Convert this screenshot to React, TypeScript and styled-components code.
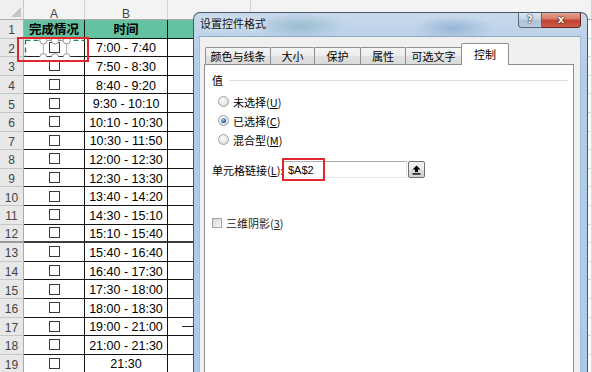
import React from "react";
import styled, { createGlobalStyle, css } from "styled-components";

const GlobalStyle = createGlobalStyle`
  *, *::before, *::after { box-sizing: border-box; }
  html, body { margin: 0; padding: 0; background: #fff; }
  body {
    width: 592px;
    height: 372px;
    overflow: hidden;
    font-family: "Liberation Sans", Arial, "Noto Sans CJK SC", sans-serif;
  }
`;

const Stage = styled.div`
  position: relative;
  width: 592px;
  height: 372px;
  overflow: hidden;
  background: #fff;
`;

/* ---------- spreadsheet ---------- */

const Sheet = styled.div`
  display: grid;
  grid-template-columns: 24px 61px 83px 83px 1fr;
  grid-template-rows: 20px repeat(19, 18.6px);
`;

const Corner = styled.div`
  position: relative;
  background: #f0f0f0;
  border-right: 1px solid #c9c9c9;
  border-bottom: 1px solid #ababab;
  &::after {
    content: "";
    position: absolute;
    right: 2px;
    bottom: 2px;
    width: 0;
    height: 0;
    border-left: 10px solid transparent;
    border-bottom: 10px solid #c6c6c6;
  }
`;

const ColHeader = styled.div`
  background: #f3f3f3;
  border-right: 1px solid #d2d2d2;
  border-bottom: 1px solid #ababab;
  color: #444;
  font: 12px/14px "Liberation Sans", Arial, sans-serif;
  text-align: center;
  padding-top: 7px;
`;

const RowHeader = styled.div<{ $heavy?: boolean }>`
  display: flex;
  align-items: center;
  justify-content: center;
  padding-top: 3px;
  background: #e8e8e8;
  border-right: 1px solid #ababab;
  border-bottom: ${(p) => (p.$heavy ? "2px solid #9a9a9a" : "1px solid #c6c6c6")};
  color: #444;
  font: 12px/14px "Liberation Sans", Arial, sans-serif;
`;

type Kind = "a" | "b" | "c" | "d";

const Cell = styled.div<{ $kind: Kind; $head?: boolean; $heavy?: boolean; $stub?: boolean }>`
  position: relative;
  display: flex;
  align-items: center;
  justify-content: center;
  padding-top: 2px;
  color: #000;
  font-family: "Liberation Sans", Arial, "Noto Sans CJK SC", sans-serif;
  font-size: 12.5px;
  line-height: 14px;
  font-weight: ${(p) => (p.$head ? 700 : 400)};
  background: ${(p) => (p.$head && p.$kind !== "d" ? "#64c2a1" : "#fff")};
  border-bottom: ${(p) =>
    p.$kind === "d" ? "1px solid #d9d9d9" : p.$heavy ? "2px solid #3c3c3c" : "1px solid #141414"};
  border-right: ${(p) =>
    p.$kind === "a" || p.$kind === "b" ? "1px solid #141414" : "1px solid #d9d9d9"};
  ${(p) =>
    p.$stub &&
    css`
      &::after {
        content: "";
        position: absolute;
        left: 14px;
        right: 0;
        top: 50%;
        height: 1px;
        background: #222;
      }
    `}
`;

const SheetCheck = styled.span`
  display: block;
  width: 11px;
  height: 11px;
  margin-top: -2px;
  border: 1px solid #3a3a3a;
  background: #fff;
`;

const SelectionLayer = styled.svg`
  position: absolute;
  left: 0;
  top: 0;
  overflow: visible;
  pointer-events: none;
`;

const RedMark = styled.div<{ $l: number; $t: number; $w: number; $h: number }>`
  position: absolute;
  left: ${(p) => p.$l}px;
  top: ${(p) => p.$t}px;
  width: ${(p) => p.$w}px;
  height: ${(p) => p.$h}px;
  border: 2px solid #e2262b;
  pointer-events: none;
`;

/* ---------- dialog ---------- */

const Window = styled.div`
  position: absolute;
  left: 193px;
  top: 12px;
  width: 395px;
  height: 364px;
  display: flex;
  flex-direction: column;
  border: 1px solid #47576a;
  border-bottom: none;
  border-radius: 7px 7px 0 0;
  background:
    radial-gradient(ellipse 46px 13px at 27% 13px, rgba(70, 135, 150, 0.32), transparent),
    radial-gradient(ellipse 40px 12px at 66% 15px, rgba(55, 105, 170, 0.3), transparent),
    linear-gradient(180deg, #c8d9ec 0px, #bdd2e8 22px, #b2cdea 60px, #acc9ec 100%);
  font-family: "Noto Sans CJK SC", "Liberation Sans", sans-serif;
  font-size: 11px;
  color: #000;
`;

const TitleBar = styled.div`
  display: flex;
  align-items: flex-start;
  height: 23px;
  padding-left: 6px;
  flex: none;
`;

const Title = styled.div`
  font-size: 11px;
  line-height: 20px;
  color: #111;
  text-shadow: 0 0 6px rgba(255, 255, 255, 0.9);
`;

const Captions = styled.div`
  display: flex;
  margin-left: auto;
  margin-right: 6px;
`;

const CaptionBtn = styled.div<{ $close?: boolean }>`
  display: flex;
  align-items: center;
  justify-content: center;
  height: 15px;
  border: 1px solid ${(p) => (p.$close ? "#6b2219" : "#56677b")};
  border-top: none;
  color: #fff;
  font: bold 10px/10px "DejaVu Sans", sans-serif;
  text-shadow: 0 0 2px #222, 0 0 1px #000;
  ${(p) =>
    p.$close
      ? css`
          width: 39px;
          border-left: none;
          border-radius: 0 0 4px 0;
          background: linear-gradient(180deg, #e6a294 0%, #d97d6d 40%, #c2402f 55%, #cf5c4d 100%);
        `
      : css`
          width: 24px;
          border-radius: 0 0 0 4px;
          background: linear-gradient(180deg, #dde6f0 0%, #c6d3e1 45%, #afc1d4 55%, #bccde0 100%);
        `}
`;

const FrameBody = styled.div`
  flex: 1;
  display: flex;
  padding: 0 6px 0 5px;
`;

const Client = styled.div`
  flex: 1;
  display: flex;
  flex-direction: column;
  background: #f0f0f0;
  border-top: 1px solid #8ea7c2;
  border-left: 1px solid #a6bdd5;
  border-right: 1px solid #a6bdd5;
  padding: 6px 6px 0 4px;
`;

const TabStrip = styled.div`
  display: flex;
  align-items: flex-end;
  height: 21px;
  padding-left: 1px;
  position: relative;
  z-index: 1;
`;

const Tab = styled.div<{ $w: number; $active?: boolean }>`
  width: ${(p) => p.$w}px;
  display: flex;
  align-items: center;
  justify-content: center;
  border: 1px solid #8c8e94;
  border-bottom: none;
  border-radius: 2px 2px 0 0;
  line-height: 14px;
  white-space: nowrap;
  & + & {
    margin-left: -1px;
  }
  ${(p) =>
    p.$active
      ? css`
          height: 22px;
          margin-bottom: -1px;
          padding-bottom: 1px;
          background: #fff;
          position: relative;
        `
      : css`
          height: 17px;
          background: linear-gradient(180deg, #f5f5f5 0%, #ececec 50%, #e1e1e1 51%, #dadada 100%);
        `}
`;

const Panel = styled.div`
  flex: 1;
  display: flex;
  flex-direction: column;
  background: #fff;
  border: 1px solid #8c8e94;
  border-bottom: none;
`;

const GroupHead = styled.div`
  display: flex;
  align-items: center;
  gap: 6px;
  height: 14px;
  margin: 8px 5px 0 7px;
  line-height: 14px;
`;

const Rule = styled.div`
  flex: 1;
  height: 1px;
  background: #d5dfe5;
`;

const RadioList = styled.div`
  display: flex;
  flex-direction: column;
  margin: 5px 0 0 13px;
`;

const OptionRow = styled.div`
  display: flex;
  align-items: center;
  gap: 4px;
  height: 19px;
  line-height: 14px;
`;

const Radio = styled.span<{ $on?: boolean }>`
  position: relative;
  display: block;
  width: 11px;
  height: 11px;
  border-radius: 50%;
  border: 1px solid #a3a3a3;
  background: radial-gradient(circle at 40% 35%, #fdfdfd 0%, #e3e3e3 60%, #d0d0d0 100%);
  ${(p) =>
    p.$on &&
    css`
      &::after {
        content: "";
        position: absolute;
        left: 2px;
        top: 2px;
        width: 5px;
        height: 5px;
        border-radius: 50%;
        background: radial-gradient(circle at 40% 35%, #a8d4f6 0%, #2a66a8 60%, #173c6c 100%);
      }
    `}
`;

const LinkRow = styled.div`
  display: flex;
  align-items: center;
  height: 17px;
  margin: 12px 0 0 7px;
  line-height: 14px;
`;

const FieldLabel = styled.div`
  width: 71px;
  white-space: nowrap;
`;

const LinkField = styled.div`
  position: relative;
  display: flex;
  align-items: center;
  width: 124px;
  height: 17px;
  padding-left: 4px;
  border: 1px solid;
  border-color: #abadb3 #dbdfe6 #e3e9ef #e2e3ea;
  background: #fff;
  font: 11px/14px "Liberation Sans", Arial, sans-serif;
`;

const PickButton = styled.div`
  display: flex;
  align-items: center;
  justify-content: center;
  width: 17px;
  height: 17px;
  margin-left: 1px;
  border: 1px solid #707070;
  border-radius: 2px;
  background: linear-gradient(180deg, #f4f4f4 0%, #ebebeb 50%, #dddddd 51%, #d0d0d0 100%);
`;

const CheckRow = styled.div`
  display: flex;
  align-items: center;
  gap: 4px;
  height: 14px;
  margin: 38px 0 0 7px;
  line-height: 14px;
  color: #222;
`;

const Check = styled.span`
  display: block;
  width: 10px;
  height: 10px;
  border: 1px solid #a6a6a6;
  background: linear-gradient(135deg, #d4d4d4 0%, #ececec 60%, #f6f6f6 100%);
`;

/* ---------- data ---------- */

const times = [
  "7:00 - 7:40",
  "7:50 - 8:30",
  "8:40 - 9:20",
  "9:30 - 10:10",
  "10:10 - 10:30",
  "10:30 - 11:50",
  "12:00 - 12:30",
  "12:30 - 13:30",
  "13:40 - 14:20",
  "14:30 - 15:10",
  "15:10 - 15:40",
  "15:40 - 16:40",
  "16:40 - 17:30",
  "17:30 - 18:00",
  "18:00 - 18:30",
  "19:00 - 21:00",
  "21:00 - 21:30",
  "21:30",
];

const tabs: { label: string; w: number; active?: boolean }[] = [
  { label: "颜色与线条", w: 66 },
  { label: "大小", w: 45 },
  { label: "保护", w: 47 },
  { label: "属性", w: 46 },
  { label: "可选文字", w: 57 },
  { label: "控制", w: 48, active: true },
];

function Selection() {
  const xs = [19.3, 31, 42.7];
  return (
    <SelectionLayer width="62" height="20" viewBox="0 0 62 20">
      <rect x="1.5" y="1.4" width="61" height="17" fill="none" stroke="#2f7d50" strokeWidth="1.4" strokeDasharray="5 3" />
      <rect x="19.3" y="1.4" width="23.4" height="16.8" fill="none" stroke="#9a9a9a" strokeWidth="0.8" />
      {xs.map((x) => (
        <React.Fragment key={x}>
          <circle cx={x} cy="1.4" r="3.6" fill="#fff" stroke="#8a8a8a" strokeWidth="0.9" />
          <circle cx={x} cy="18.2" r="3.6" fill="#fff" stroke="#8a8a8a" strokeWidth="0.9" />
        </React.Fragment>
      ))}
    </SelectionLayer>
  );
}

export default function App() {
  return (
    <>
      <GlobalStyle />
      <Stage>
        <Sheet>
          <Corner />
          <ColHeader>A</ColHeader>
          <ColHeader>B</ColHeader>
          <ColHeader />
          <ColHeader />

          <RowHeader>1</RowHeader>
          <Cell $kind="a" $head>
            完成情况
          </Cell>
          <Cell $kind="b" $head>
            时间
          </Cell>
          <Cell $kind="c" $head />
          <Cell $kind="d" />

          {times.map((t, i) => {
            const n = i + 2;
            const heavy = n === 12;
            return (
              <React.Fragment key={n}>
                <RowHeader $heavy={heavy}>{n}</RowHeader>
                <Cell $kind="a" $heavy={heavy}>
                  <SheetCheck />
                  {n === 2 && <Selection />}
                </Cell>
                <Cell $kind="b" $heavy={heavy}>
                  {t}
                </Cell>
                <Cell $kind="c" $heavy={heavy} $stub={n === 17} />
                <Cell $kind="d" />
              </React.Fragment>
            );
          })}
        </Sheet>

        <RedMark $l={17} $t={37} $w={72} $h={25} />

        <Window>
          <TitleBar>
            <Title>设置控件格式</Title>
            <Captions>
              <CaptionBtn>?</CaptionBtn>
              <CaptionBtn $close>x</CaptionBtn>
            </Captions>
          </TitleBar>
          <FrameBody>
            <Client>
              <TabStrip>
                {tabs.map((t) => (
                  <Tab key={t.label} $w={t.w} $active={t.active}>
                    {t.label}
                  </Tab>
                ))}
              </TabStrip>
              <Panel>
                <GroupHead>
                  <span>值</span>
                  <Rule />
                </GroupHead>
                <RadioList>
                  <OptionRow>
                    <Radio />
                    <span>
                      未选择(<u>U</u>)
                    </span>
                  </OptionRow>
                  <OptionRow>
                    <Radio $on />
                    <span>
                      已选择(<u>C</u>)
                    </span>
                  </OptionRow>
                  <OptionRow>
                    <Radio />
                    <span>
                      混合型(<u>M</u>)
                    </span>
                  </OptionRow>
                </RadioList>
                <LinkRow>
                  <FieldLabel>
                    单元格链接(<u>L</u>):
                  </FieldLabel>
                  <LinkField>
                    $A$2
                    <RedMark $l={-2} $t={-4} $w={43} $h={23} />
                  </LinkField>
                  <PickButton>
                    <svg width="9" height="10" viewBox="0 0 9 10">
                      <path d="M4.5 0.5 L8.5 4.5 H6 V7 H3 V4.5 H0.5 Z" fill="#000" />
                      <rect x="0.5" y="8.2" width="8" height="1.4" fill="#000" />
                    </svg>
                  </PickButton>
                </LinkRow>
                <CheckRow>
                  <Check />
                  <span>
                    三维阴影(<u>3</u>)
                  </span>
                </CheckRow>
              </Panel>
            </Client>
          </FrameBody>
        </Window>
      </Stage>
    </>
  );
}
